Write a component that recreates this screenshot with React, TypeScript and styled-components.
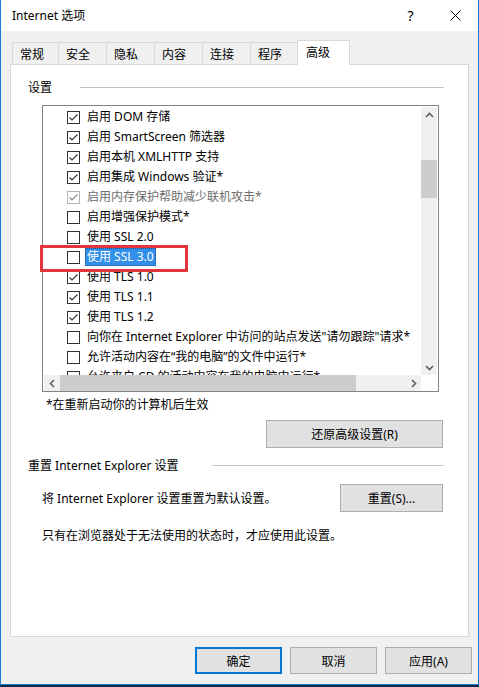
import React from 'react';
import styled, { createGlobalStyle } from 'styled-components';

const GlobalStyle = createGlobalStyle`
  html, body {
    margin: 0;
    padding: 0;
    background: #0e2a47;
  }
  body {
    font-family: "Noto Sans", "Noto Sans CJK SC", sans-serif;
    font-size: 12px;
    color: #000;
  }
`;

interface IRow {
    label: string;
    checked: boolean;
    disabled?: boolean;
    selected?: boolean;
}

const rows: IRow[] = [
    { label: '启用 DOM 存储', checked: true },
    { label: '启用 SmartScreen 筛选器', checked: true },
    { label: '启用本机 XMLHTTP 支持', checked: true },
    { label: '启用集成 Windows 验证*', checked: true },
    { label: '启用内存保护帮助减少联机攻击*', checked: true, disabled: true },
    { label: '启用增强保护模式*', checked: false },
    { label: '使用 SSL 2.0', checked: false },
    { label: '使用 SSL 3.0', checked: false, selected: true },
    { label: '使用 TLS 1.0', checked: true },
    { label: '使用 TLS 1.1', checked: true },
    { label: '使用 TLS 1.2', checked: true },
    { label: '向你在 Internet Explorer 中访问的站点发送"请勿跟踪"请求*', checked: false },
    { label: '允许活动内容在“我的电脑”的文件中运行*', checked: false },
    { label: '允许来自 CD 的活动内容在我的电脑中运行*', checked: false },
];

const tabs = ['常规', '安全', '隐私', '内容', '连接', '程序', '高级'];

const Desktop = styled.div`
    width: 479px;
    height: 687px;
    background: #0e2a47;
`;

const Window = styled.div`
    width: 479px;
    height: 685px;
    box-sizing: border-box;
    border: 1px solid #1c79d0;
    border-top: none;
    display: flex;
    flex-direction: column;
    background: #f0f0f0;
`;

const TitleBar = styled.div`
    height: 31px;
    flex: none;
    background: #fff;
    display: flex;
    align-items: center;
    padding-left: 11px;
`;

const Title = styled.div`
    flex: 1;
    line-height: 16px;
`;

const CaptionButton = styled.div`
    width: 45px;
    height: 31px;
    display: flex;
    align-items: center;
    justify-content: center;
    font-size: 14px;
`;

const Body = styled.div`
    flex: 1;
    display: flex;
    flex-direction: column;
    padding: 9px 9px 0 9px;
    min-height: 0;
`;

const TabRow = styled.div`
    height: 24px;
    flex: none;
    display: flex;
    align-items: flex-end;
    padding-left: 2px;
`;

const Tab = styled.div<{ $active?: boolean; $w: number }>`
    box-sizing: border-box;
    width: ${p => p.$w}px;
    height: ${p => (p.$active ? 25 : 22)}px;
    margin-right: -1px;
    margin-bottom: ${p => (p.$active ? -1 : 0)}px;
    padding-left: ${p => (p.$active ? 8 : 7)}px;
    padding-bottom: ${p => (p.$active ? 3 : 0)}px;
    border: 1px solid #d9d9d9;
    border-bottom: none;
    background: ${p => (p.$active ? '#fff' : '#f0f0f0')};
    display: flex;
    align-items: center;
    position: relative;
    z-index: ${p => (p.$active ? 1 : 0)};
    margin-left: ${p => (p.$active ? -1 : 0)}px;
`;

const Panel = styled.div`
    flex: 1;
    background: #fff;
    border: 1px solid #d9d9d9;
    display: flex;
    flex-direction: column;
    padding: 14px 24px 0 17px;
    min-height: 0;
`;

const GroupHeader = styled.div<{ $gap: number }>`
    display: flex;
    align-items: center;
    height: 16px;
    gap: ${p => p.$gap}px;
    &::after {
        content: '';
        flex: 1;
        height: 1px;
        background: #c4c4c4;
    }
`;

const ListBox = styled.div`
    position: relative;
    box-sizing: border-box;
    width: 397px;
    height: 287px;
    margin: 10px 0 0 14px;
    border: 1px solid #828282;
    padding: 1px 1px 0 1px;
    display: grid;
    grid-template-columns: 1fr 16px;
    grid-template-rows: 1fr 16px;
`;

const Viewport = styled.div`
    overflow: hidden;
`;

const Row = styled.div<{ $disabled?: boolean }>`
    height: 20px;
    display: flex;
    align-items: center;
    padding-left: 23px;
    white-space: nowrap;
    color: ${p => (p.$disabled ? '#6d6d6d' : '#000')};
`;

const Box = styled.span<{ $disabled?: boolean }>`
    box-sizing: border-box;
    width: 13px;
    height: 13px;
    flex: none;
    border: 1px solid ${p => (p.$disabled ? '#b5b5b5' : '#333')};
    background: #fff;
    margin-right: 5px;
    display: flex;
`;

const Label = styled.span<{ $selected?: boolean }>`
    box-sizing: border-box;
    height: 18px;
    line-height: 16px;
    padding: 0 1px;
    border: 1px ${p => (p.$selected ? 'dotted #1c4f8a' : 'solid transparent')};
    background: ${p => (p.$selected ? '#3390ea' : 'transparent')};
    color: ${p => (p.$selected ? '#fff' : 'inherit')};
`;

const VScroll = styled.div`
    background: #f0f0f0;
    display: flex;
    flex-direction: column;
`;

const HScroll = styled.div`
    background: #f0f0f0;
    display: flex;
`;

const Arrow = styled.div`
    width: 16px;
    height: 16px;
    flex: none;
    display: flex;
    align-items: center;
    justify-content: center;
`;

const VTrack = styled.div`
    flex: 1;
`;

const VThumb = styled.div`
    margin-top: 37px;
    height: 38px;
    background: #cdcdcd;
`;

const HTrack = styled.div`
    flex: 1;
`;

const HThumb = styled.div`
    width: 296px;
    height: 16px;
    background: #cdcdcd;
`;

const Corner = styled.div`
    background: #fff;
`;

const Callout = styled.div`
    position: absolute;
    left: -3px;
    top: 139px;
    width: 148px;
    height: 27px;
    box-sizing: border-box;
    border: 3px solid #e0363c;
    pointer-events: none;
`;

const Note = styled.div<{ $indent: number; $top: number }>`
    margin: ${p => p.$top}px 0 0 ${p => p.$indent}px;
    line-height: 16px;
    white-space: nowrap;
`;

const Button = styled.div<{ $w: number; $h: number; $focus?: boolean }>`
    box-sizing: border-box;
    width: ${p => p.$w}px;
    height: ${p => p.$h}px;
    flex: none;
    background: #e1e1e1;
    border: ${p => (p.$focus ? '2px solid #0078d7' : '1px solid #adadad')};
    display: flex;
    align-items: center;
    justify-content: center;
`;

const RestoreButton = styled(Button)`
    align-self: flex-end;
    margin: 7px 1px 0 0;
`;

const ResetRow = styled.div`
    display: flex;
    align-items: center;
    justify-content: space-between;
    margin: 11px 1px 0 14px;
`;

const Footer = styled.div`
    flex: none;
    display: flex;
    justify-content: flex-end;
    gap: 8px;
    padding: 10px 0 10px 0;
    margin-right: -3px;
`;

const Chevron = ({ dir }: { dir: 'up' | 'down' | 'left' | 'right' }) => {
    const rot = { up: 0, right: 90, down: 180, left: 270 }[dir];
    return (
        <svg width="9" height="9" viewBox="0 0 9 9" style={{ transform: `rotate(${rot}deg)` }}>
            <polyline points="1,6 4.5,2.5 8,6" fill="none" stroke="#606060" strokeWidth="1.6" />
        </svg>
    );
};

const CheckBox = ({ checked, disabled }: { checked: boolean; disabled?: boolean }) => (
    <Box $disabled={disabled}>
        {checked && (
            <svg width="11" height="11" viewBox="0 0 11 11">
                <polyline points="1.5,5.5 4,8 9.5,2.5" fill="none" stroke={disabled ? '#8a8a8a' : '#333'} strokeWidth="1.1" />
            </svg>
        )}
    </Box>
);

export default function App() {
    return (
        <Desktop>
            <GlobalStyle />
            <Window>
                <TitleBar>
                    <Title>Internet 选项</Title>
                    <CaptionButton>?</CaptionButton>
                    <CaptionButton>
                        <svg width="11" height="11" viewBox="0 0 11 11">
                            <path d="M0.5 0.5 L10.5 10.5 M10.5 0.5 L0.5 10.5" stroke="#000" strokeWidth="1" />
                        </svg>
                    </CaptionButton>
                </TitleBar>
                <Body>
                    <TabRow>
                        {tabs.map((t, i) => (
                            <Tab key={t} $active={i === 6} $w={i === 0 ? 47 : i === 6 ? 53 : 49}>{t}</Tab>
                        ))}
                    </TabRow>
                    <Panel>
                        <GroupHeader $gap={28}>设置</GroupHeader>
                        <ListBox>
                            <Viewport>
                                {rows.map(r => (
                                    <Row key={r.label} $disabled={r.disabled}>
                                        <CheckBox checked={r.checked} disabled={r.disabled} />
                                        <Label $selected={r.selected}>{r.label}</Label>
                                    </Row>
                                ))}
                            </Viewport>
                            <VScroll>
                                <Arrow><Chevron dir="up" /></Arrow>
                                <VTrack><VThumb /></VTrack>
                                <Arrow><Chevron dir="down" /></Arrow>
                            </VScroll>
                            <HScroll>
                                <Arrow><Chevron dir="left" /></Arrow>
                                <HTrack><HThumb /></HTrack>
                                <Arrow><Chevron dir="right" /></Arrow>
                            </HScroll>
                            <Corner />
                            <Callout />
                        </ListBox>
                        <Note $indent={18} $top={5}>*在重新启动你的计算机后生效</Note>
                        <RestoreButton $w={177} $h={28}>还原高级设置(R)</RestoreButton>
                        <GroupHeader $gap={33} style={{ marginTop: 9 }}>重置 Internet Explorer 设置</GroupHeader>
                        <ResetRow>
                            <span>将 Internet Explorer 设置重置为默认设置。</span>
                            <Button $w={103} $h={28}>重置(S)...</Button>
                        </ResetRow>
                        <Note $indent={14} $top={16}>只有在浏览器处于无法使用的状态时，才应使用此设置。</Note>
                    </Panel>
                    <Footer>
                        <Button $w={87} $h={27} $focus>确定</Button>
                        <Button $w={87} $h={27}>取消</Button>
                        <Button $w={87} $h={27}>应用(A)</Button>
                    </Footer>
                </Body>
            </Window>
        </Desktop>
    );
}
